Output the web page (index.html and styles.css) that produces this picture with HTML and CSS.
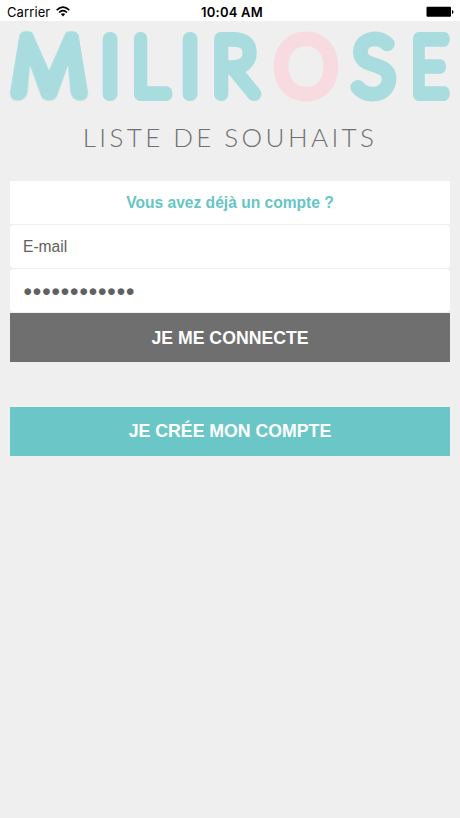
FILE: index.html
```html
<!DOCTYPE html>
<html lang="fr">
<head>
<meta charset="utf-8">
<meta name="viewport" content="width=device-width, initial-scale=1">
<title>Milirose</title>
<link rel="stylesheet" href="styles.css">
</head>
<body>
<header class="status">
  <div class="carrier"><span>Carrier</span>
    <svg class="wifi" width="14" height="11" viewBox="0 0 14 11"><g fill="none" stroke="#000" stroke-width="1.7"><path d="M.7 4.1Q7-1.9 13.3 4.1"/><path d="M3 6.5Q7 2.8 11 6.5"/></g><path d="M4.8 8.1Q7 6.3 9.2 8.1L7 10.4Z"/></svg>
  </div>
  <time class="clock">10:04 AM</time>
  <svg class="battery" width="28" height="12" viewBox="0 0 28 12"><rect x=".5" y=".8" width="24.5" height="10" rx="1"/><path d="M26 4Q27.5 4.5 27.5 6Q27.5 7.5 26 8Z"/></svg>
</header>
<main>
  <h1 class="brand">
    <svg class="wordmark initial" width="98" height="90" viewBox="0 0 98 90">
      <text class="letters" text-anchor="middle" transform="translate(49 71) scale(1.23 1)">M</text>
    </svg>
    <svg class="wordmark" width="362" height="90" viewBox="98 0 362 90">
      <g class="letters">
        <text transform="translate(100.6 72.7)">I</text>
        <text transform="translate(132.1 72.7) scale(.9 1)">L</text>
        <text transform="translate(180.6 72.7)">I</text>
        <text transform="translate(212 72.7) scale(.96 1)">R</text>
        <text class="rose" transform="translate(275.2 72.7)">O</text>
        <text transform="translate(353 72.7)">S</text>
        <text transform="translate(411.2 72.7) scale(.8 1)">E</text>
      </g>
    </svg>
  </h1>
  <p class="tagline">LISTE DE SOUHAITS</p>
  <form class="login">
    <h2 class="prompt">Vous avez déjà un compte ?</h2>
    <input class="field" type="text" placeholder="E-mail" aria-label="E-mail">
    <div class="field password">●●●●●●●●●●●●</div>
    <button class="button connect" type="button">JE ME CONNECTE</button>
    <button class="button create" type="button">JE CRÉE MON COMPTE</button>
  </form>
</main>
</body>
</html>
```
FILE: styles.css
```css
* { box-sizing: border-box; }
body { margin: 0; min-height: 818px; background: #efefef; font-family: "Liberation Sans", Arial, sans-serif; }
.status { display: grid; grid-template-columns: 1fr auto 1fr; align-items: center; height: 21px; padding: 3px 6px 0 7px; background: #fff; color: #000; font: 13px/18px Inter, sans-serif; }
.carrier { display: flex; align-items: center; gap: 6px; letter-spacing: .1px; }
.wifi { margin-top: -2px; }
.clock { padding-left: 3px; font-weight: 600; letter-spacing: .2px; }
.battery { justify-self: end; }
.brand { display: flex; margin: 0; height: 90px; }
.wordmark { display: block; flex: none; overflow: visible; }
.letters { font: 100 78.5px Lato, sans-serif; fill: #a8dcde; stroke: #a8dcde; stroke-width: 13.8px; stroke-linejoin: round; stroke-linecap: round; }
/* The M tapers towards the top so that its legs splay outwards. */
.initial { transform-origin: 49px 71px; transform: matrix3d(1, 0, 0, 0, 0, 1.33, 0, -0.0056, 0, 0, 1, 0, 0, 0, 0, 1); }
.initial .letters { font: 100 76px Inter, sans-serif; stroke-width: 12.5px; }
.rose { fill: #f8dbe0; stroke: #f8dbe0; }
.tagline { margin: 10px 0 0; height: 32px; text-align: center; font: 300 26px/32px Lato, sans-serif; letter-spacing: 3.4px; word-spacing: -1px; color: #707070; }
.login { display: flex; flex-direction: column; margin: 28px 10px 0; }
.prompt { margin: 0 0 1px; height: 43px; background: #fff; color: #66c5c5; text-align: center; font: bold 15.6px/44px "Liberation Sans", Arial, sans-serif; }
.field { width: 100%; height: 43px; margin-bottom: 1px; padding: 0 13px; border: 0; border-radius: 4px; background: #fff; color: #606060; font: 15.6px/43px "Liberation Sans", Arial, sans-serif; }
.field::placeholder { color: #606060; opacity: 1; }
.password { line-height: 44px; letter-spacing: -.1px; }
.button { height: 49px; padding: 1px 0 0; border: 0; color: #fff; font: bold 17.7px/48px "Liberation Sans", Arial, sans-serif; }
.connect { background: #6f6f6f; }
.create { margin-top: 44.6px; padding: 0; background: #6bc7c7; }
```
